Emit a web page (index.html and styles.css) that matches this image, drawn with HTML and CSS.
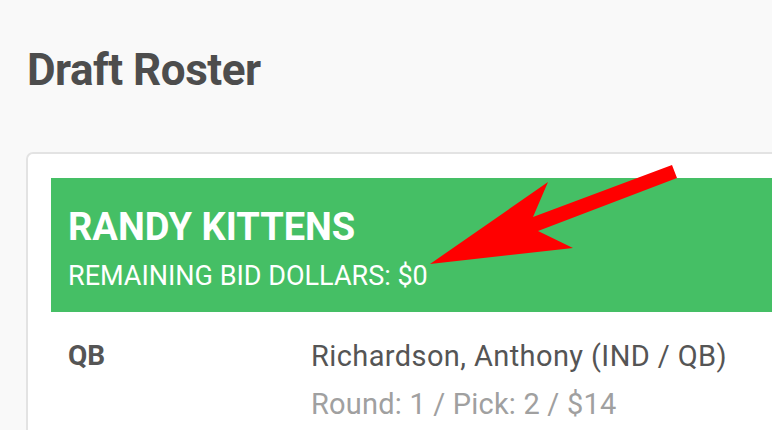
FILE: index.html
```html
<!DOCTYPE html>
<html lang="en">
  <head>
    <meta charset="UTF-8" />
    <meta name="viewport" content="width=device-width, initial-scale=1.0" />
    <title>Draft Roster</title>
    <link rel="stylesheet" href="styles.css">
  </head>
  <body>
    <h1 class="page-title">Draft Roster</h1>

    <div class="card">
      <div class="team-banner">
        <div class="team-name">RANDY KITTENS</div>
        <div class="team-budget">REMAINING BID DOLLARS: $0</div>
      </div>

      <div class="roster-row">
        <div class="roster-pos">QB</div>
        <div class="roster-player">
          <div class="player-name">Richardson, Anthony (IND / QB)</div>
          <div class="player-pick">Round: 1 / Pick: 2 / $14</div>
        </div>
      </div>
    </div>

    <!-- Annotation arrow -->
    <svg class="arrow" width="772" height="430" viewBox="0 0 772 430">
      <polygon
        points="672,165 533,217 548,182 430,264 573,248 538,231 677,178"
        fill="#ff0000"
      />
    </svg>
  </body>
</html>
```

FILE: styles.css
```css
body {
  margin: 0;
  background-color: #f9f9f9;
  font-family: Roboto, "Liberation Sans", sans-serif;
  color: #555555;
  overflow: hidden;
  width: 772px;
  height: 430px;
  position: relative;
}
.page-title {
  margin: 0;
  padding: 44px 0 0 27px;
  font-size: 44px;
  line-height: 52px;
  font-weight: 700;
  color: #4d4d4d;
  letter-spacing: -0.5px;
}
.card {
  margin: 56px 0 0 26px;
  width: 800px;
  background: white;
  border: 2px solid #e3e3e3;
  border-radius: 7px;
  padding: 24px 0 60px 23px;
}
.team-banner {
  background-color: #45bf65;
  color: white;
  padding: 27px 17px 22px;
  height: 85px;
}
.team-name {
  font-size: 38px;
  font-weight: 700;
  line-height: 44px;
}
.team-budget {
  font-size: 27px;
  line-height: 36px;
  margin-top: 9px;
}
.roster-row {
  display: flex;
  padding: 24px 17px 0;
}
.roster-pos {
  width: 243px;
  font-size: 28px;
  font-weight: 700;
  line-height: 40px;
}
.player-name {
  font-size: 29px;
  line-height: 40px;
  letter-spacing: 0.4px;
}
.player-pick {
  font-size: 29px;
  line-height: 40px;
  letter-spacing: 0.2px;
  color: #a0a0a0;
  margin-top: 8px;
}
.arrow {
  position: absolute;
  left: 0;
  top: 0;
}
```
